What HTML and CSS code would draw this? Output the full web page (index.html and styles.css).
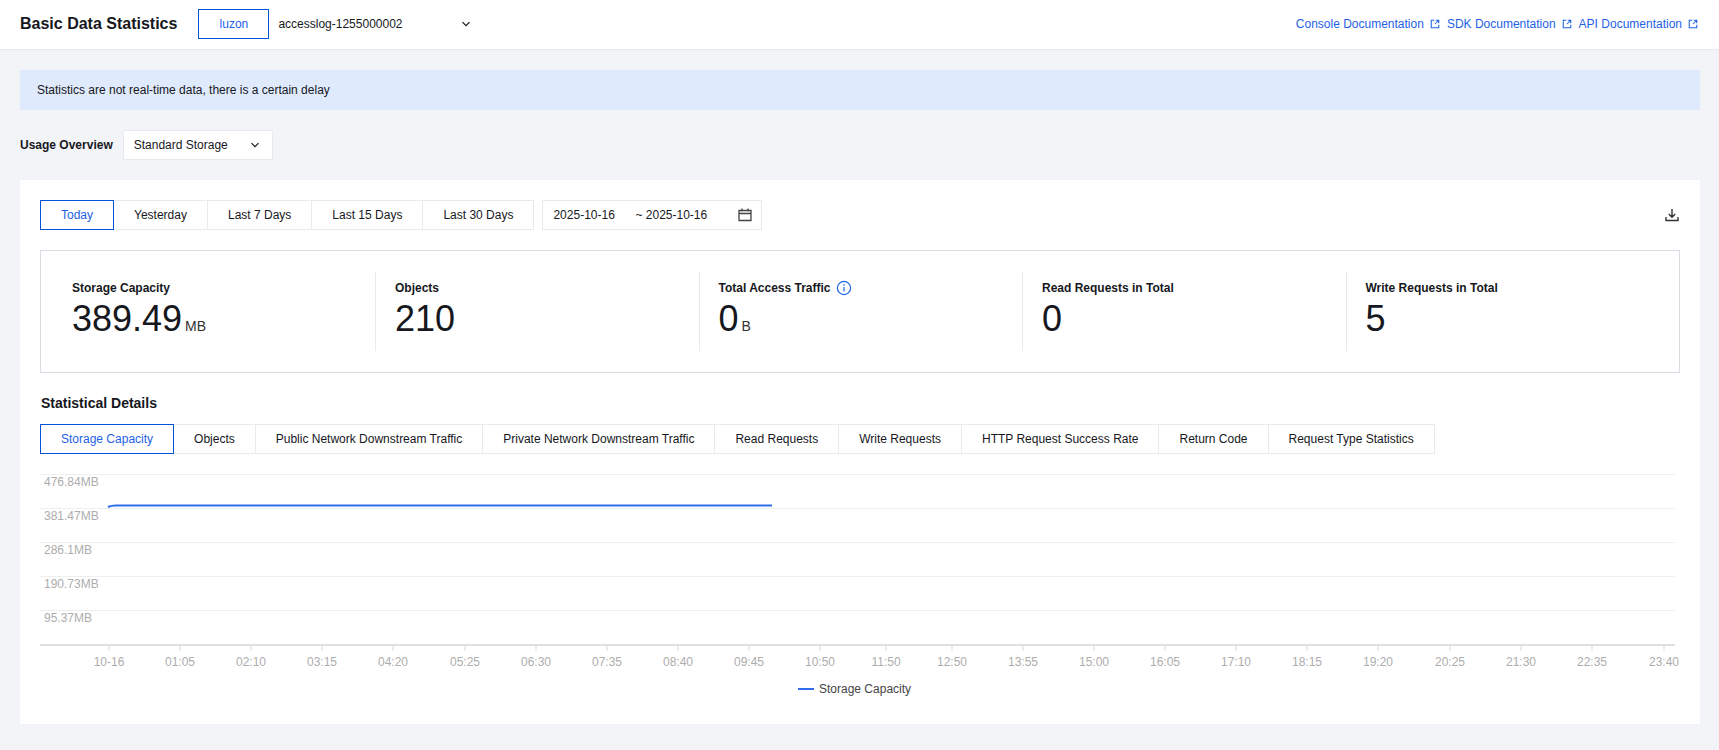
FILE: index.html
```html
<!DOCTYPE html>
<html lang="en">
<head>
    <meta charset="UTF-8">
    <title>Basic Data Statistics</title>
    <link rel="stylesheet" href="styles.css">
</head>
<body>
    <header class="topbar">
        <h1 class="page-title">Basic Data Statistics</h1>
        <button class="region-btn">luzon</button>
        <div class="bucket-select">
            <span>accesslog-1255000002</span>
            <svg class="chevron" viewBox="0 0 16 16"><path d="M4.5 6.2L8 9.7l3.5-3.5"/></svg>
        </div>
        <nav class="doc-links">
            <a class="doc-link">Console Documentation<svg class="ext-icon" viewBox="0 0 16 16"><path d="M7 3H3v10h10V9M9 3h4v4M13 3L8 8"/></svg></a>
            <a class="doc-link">SDK Documentation<svg class="ext-icon" viewBox="0 0 16 16"><path d="M7 3H3v10h10V9M9 3h4v4M13 3L8 8"/></svg></a>
            <a class="doc-link">API Documentation<svg class="ext-icon" viewBox="0 0 16 16"><path d="M7 3H3v10h10V9M9 3h4v4M13 3L8 8"/></svg></a>
        </nav>
    </header>

    <main class="content">
        <div class="alert">Statistics are not real-time data, there is a certain delay</div>

        <div class="usage-row">
            <span class="usage-label">Usage Overview</span>
            <div class="type-select">
                <span>Standard Storage</span>
                <svg class="chevron" viewBox="0 0 16 16"><path d="M4.5 6.2L8 9.7l3.5-3.5"/></svg>
            </div>
        </div>

        <section class="card">
            <div class="toolbar">
                <div class="tabs">
                    <div class="tab active">Today</div>
                    <div class="tab">Yesterday</div>
                    <div class="tab">Last 7 Days</div>
                    <div class="tab">Last 15 Days</div>
                    <div class="tab">Last 30 Days</div>
                </div>
                <div class="date-range">
                    <span class="date-from">2025-10-16</span>
                    <span>~ 2025-10-16</span>
                    <svg class="calendar-icon" viewBox="0 0 16 16"><path d="M2 3.5h12v10H2zM2 6.5h12M5 1.5v3M11 1.5v3"/></svg>
                </div>
                <svg class="download-icon" viewBox="0 0 16 16"><path d="M8 2v8M4.8 7L8 10.2 11.2 7M2 10v3.5h12V10"/></svg>
            </div>

            <div class="summary">
                <div class="stat">
                    <div class="stat-label">Storage Capacity</div>
                    <div class="stat-value">389.49<span class="stat-unit">MB</span></div>
                </div>
                <div class="stat">
                    <div class="stat-label">Objects</div>
                    <div class="stat-value">210</div>
                </div>
                <div class="stat">
                    <div class="stat-label">Total Access Traffic
                        <svg class="info-icon" viewBox="0 0 16 16"><circle cx="8" cy="8" r="6.6"/><path d="M8 7v4.6M8 4.2v1.6"/></svg>
                    </div>
                    <div class="stat-value">0<span class="stat-unit">B</span></div>
                </div>
                <div class="stat">
                    <div class="stat-label">Read Requests in Total</div>
                    <div class="stat-value">0</div>
                </div>
                <div class="stat">
                    <div class="stat-label">Write Requests in Total</div>
                    <div class="stat-value">5</div>
                </div>
            </div>

            <h2 class="section-title">Statistical Details</h2>
            <div class="tabs">
                <div class="tab active">Storage Capacity</div>
                <div class="tab">Objects</div>
                <div class="tab">Public Network Downstream Traffic</div>
                <div class="tab">Private Network Downstream Traffic</div>
                <div class="tab">Read Requests</div>
                <div class="tab">Write Requests</div>
                <div class="tab">HTTP Request Success Rate</div>
                <div class="tab">Return Code</div>
                <div class="tab">Request Type Statistics</div>
            </div>

            <svg class="chart" width="1640" height="240" viewBox="0 0 1640 240">
                <g class="grid">
                    <line x1="0" x2="1635" y1="10.5" y2="10.5"/>
                    <line x1="0" x2="1635" y1="44.5" y2="44.5"/>
                    <line x1="0" x2="1635" y1="78.5" y2="78.5"/>
                    <line x1="0" x2="1635" y1="112.5" y2="112.5"/>
                    <line x1="0" x2="1635" y1="146.5" y2="146.5"/>
                </g>
                <g class="y-labels">
                    <text x="4" y="22">476.84MB</text>
                    <text x="4" y="56">381.47MB</text>
                    <text x="4" y="90">286.1MB</text>
                    <text x="4" y="124">190.73MB</text>
                    <text x="4" y="158">95.37MB</text>
                </g>
                <path class="series" d="M68 43C70 42 72 41.5 76 41.5H732"/>
                <line class="axis" x1="0" x2="1635" y1="181" y2="181"/>
                <g class="ticks">
                    <line x1="69" x2="69" y1="182" y2="187"/>
                    <line x1="140" x2="140" y1="182" y2="187"/>
                    <line x1="211" x2="211" y1="182" y2="187"/>
                    <line x1="282" x2="282" y1="182" y2="187"/>
                    <line x1="353" x2="353" y1="182" y2="187"/>
                    <line x1="425" x2="425" y1="182" y2="187"/>
                    <line x1="496" x2="496" y1="182" y2="187"/>
                    <line x1="567" x2="567" y1="182" y2="187"/>
                    <line x1="638" x2="638" y1="182" y2="187"/>
                    <line x1="709" x2="709" y1="182" y2="187"/>
                    <line x1="780" x2="780" y1="182" y2="187"/>
                    <line x1="846" x2="846" y1="182" y2="187"/>
                    <line x1="912" x2="912" y1="182" y2="187"/>
                    <line x1="983" x2="983" y1="182" y2="187"/>
                    <line x1="1054" x2="1054" y1="182" y2="187"/>
                    <line x1="1125" x2="1125" y1="182" y2="187"/>
                    <line x1="1196" x2="1196" y1="182" y2="187"/>
                    <line x1="1267" x2="1267" y1="182" y2="187"/>
                    <line x1="1338" x2="1338" y1="182" y2="187"/>
                    <line x1="1410" x2="1410" y1="182" y2="187"/>
                    <line x1="1481" x2="1481" y1="182" y2="187"/>
                    <line x1="1552" x2="1552" y1="182" y2="187"/>
                    <line x1="1624" x2="1624" y1="182" y2="187"/>
                </g>
                <g class="x-labels">
                    <text x="69" y="202">10-16</text>
                    <text x="140" y="202">01:05</text>
                    <text x="211" y="202">02:10</text>
                    <text x="282" y="202">03:15</text>
                    <text x="353" y="202">04:20</text>
                    <text x="425" y="202">05:25</text>
                    <text x="496" y="202">06:30</text>
                    <text x="567" y="202">07:35</text>
                    <text x="638" y="202">08:40</text>
                    <text x="709" y="202">09:45</text>
                    <text x="780" y="202">10:50</text>
                    <text x="846" y="202">11:50</text>
                    <text x="912" y="202">12:50</text>
                    <text x="983" y="202">13:55</text>
                    <text x="1054" y="202">15:00</text>
                    <text x="1125" y="202">16:05</text>
                    <text x="1196" y="202">17:10</text>
                    <text x="1267" y="202">18:15</text>
                    <text x="1338" y="202">19:20</text>
                    <text x="1410" y="202">20:25</text>
                    <text x="1481" y="202">21:30</text>
                    <text x="1552" y="202">22:35</text>
                    <text x="1624" y="202">23:40</text>
                </g>
                <line class="legend-line" x1="758" x2="774" y1="225" y2="225"/>
                <text class="legend-text" x="779" y="229">Storage Capacity</text>
            </svg>
        </section>
    </main>
</body>
</html>
```

FILE: styles.css
```css
:root {
    --blue: #0052d9;
    --link: #1e62e6;
    --line: #e7eaef;
    --text: #16181d;
}

* {
    box-sizing: border-box;
}

body {
    margin: 0;
    background: #f2f4f8;
    color: var(--text);
    font-family: "Liberation Sans", Arial, sans-serif;
    font-size: 12px;
}

svg {
    fill: none;
    stroke: currentColor;
}

.topbar {
    display: flex;
    align-items: center;
    height: 50px;
    padding: 0 20px 1px;
    background: #fff;
    border-bottom: 1px solid var(--line);
}

.page-title {
    margin: 0 21px 0 0;
    font-size: 16px;
    font-weight: bold;
}

.region-btn {
    width: 71px;
    height: 30px;
    padding: 0;
    background: #fff;
    border: 1px solid var(--blue);
    color: var(--link);
    font: inherit;
}

.bucket-select {
    display: flex;
    align-items: center;
    justify-content: space-between;
    width: 196px;
    margin-left: 9px;
}

.chevron {
    width: 16px;
    height: 16px;
    stroke-width: 1.2;
}

.doc-links {
    display: flex;
    margin-left: auto;
    gap: 6px;
}

.doc-link {
    display: flex;
    align-items: center;
    color: var(--link);
}

.ext-icon {
    width: 12px;
    height: 12px;
    margin-left: 5px;
    stroke-width: 1.4;
}

.content {
    padding: 20px 19px 20px 20px;
}

.alert {
    height: 40px;
    padding: 0 17px;
    line-height: 40px;
    background: #e0eafd;
}

.usage-row {
    display: flex;
    align-items: center;
    margin: 20px 0;
}

.usage-label {
    margin-right: 10px;
    font-weight: bold;
}

.type-select {
    display: flex;
    align-items: center;
    justify-content: space-between;
    width: 150px;
    height: 30px;
    padding: 0 9px 0 10px;
    background: #fff;
    border: 1px solid var(--line);
}

.card {
    padding: 20px;
    background: #fff;
}

.toolbar {
    display: flex;
    align-items: center;
    margin-bottom: 20px;
}

.tabs {
    display: flex;
}

.tab {
    height: 30px;
    padding: 0 20px;
    line-height: 28px;
    background: #fff;
    border: 1px solid var(--line);
    margin-left: -1px;
    white-space: nowrap;
}

.tab:first-child {
    margin-left: 0;
}

.tab.active {
    position: relative;
    border-color: var(--blue);
    color: var(--link);
}

.date-range {
    display: flex;
    align-items: center;
    width: 220px;
    height: 30px;
    margin-left: 8px;
    padding: 0 8px 0 10px;
    border: 1px solid var(--line);
}

.date-from {
    width: 82px;
}

.calendar-icon {
    width: 16px;
    height: 16px;
    margin-left: auto;
    color: #444;
    stroke-width: 1.3;
}

.download-icon {
    width: 16px;
    height: 16px;
    margin-left: auto;
    color: #333;
    stroke-width: 1.4;
}

.summary {
    display: grid;
    grid-template-columns: 334px repeat(3, 323.5px) 1fr;
    height: 123px;
    margin-bottom: 22px;
    padding: 21px 0;
    border: 1px solid #d9dce3;
}

.stat {
    padding-left: 19px;
    border-left: 1px solid var(--line);
}

.stat:first-child {
    padding-left: 31px;
    border-left: 0;
}

.stat-label {
    display: flex;
    align-items: center;
    gap: 5px;
    height: 16px;
    margin-top: 8px;
    font-weight: bold;
}

.stat-value {
    margin-top: 3px;
    font-size: 36px;
    line-height: 40px;
}

.stat-unit {
    margin-left: 3px;
    font-size: 14px;
    color: #333;
}

.info-icon {
    width: 16px;
    height: 16px;
    color: var(--link);
    stroke-width: 1.2;
}

.section-title {
    margin: 0 0 13px 1px;
    font-size: 14px;
    line-height: 16px;
    font-weight: bold;
}

.chart {
    display: block;
    margin-top: 10px;
}

.grid line {
    stroke: #eeeeee;
}

.axis {
    stroke: #e0e0e0;
    stroke-width: 2;
}

.ticks line {
    stroke: #d9d9d9;
}

.series {
    stroke: #2f6fed;
    stroke-width: 2;
}

.y-labels text,
.x-labels text {
    fill: #adadad;
    stroke: none;
    font-size: 12px;
}

.x-labels text {
    text-anchor: middle;
}

.legend-line {
    stroke: #2f6fed;
    stroke-width: 2;
}

.legend-text {
    fill: #444;
    stroke: none;
    font-size: 12px;
}
```
